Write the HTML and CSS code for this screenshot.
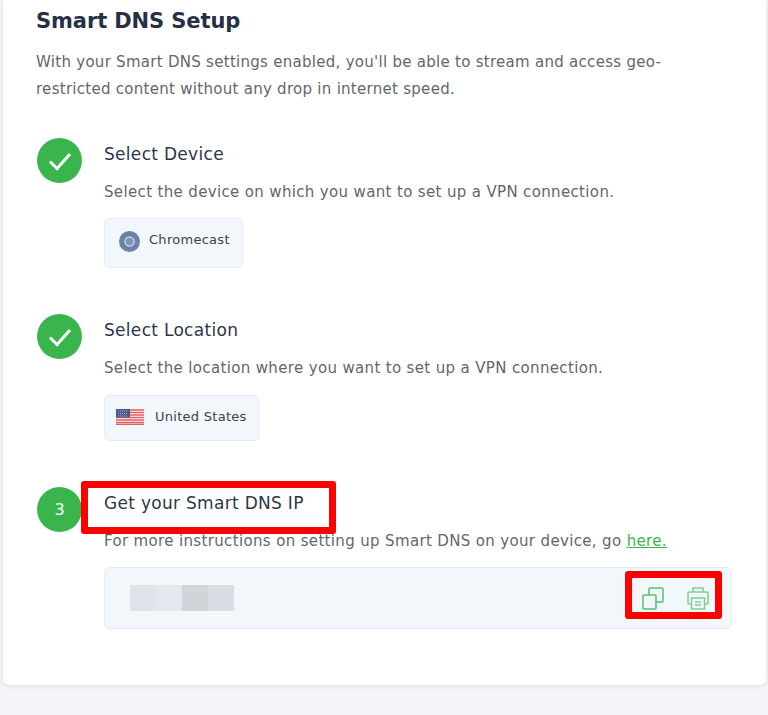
FILE: index.html
```html
<!DOCTYPE html>
<html lang="en">
<head>
<meta charset="utf-8">
<title>Smart DNS Setup</title>
<link rel="stylesheet" href="styles.css">
</head>
<body>
<main class="card">
  <h1 class="title">Smart DNS Setup</h1>
  <p class="intro">With your Smart DNS settings enabled, you'll be able to stream and access geo-restricted content without any drop in internet speed.</p>

  <section class="step">
    <div class="badge"><svg width="24" height="24" viewBox="0 0 24 24"><path d="M2 12.5l7 7L22 5" fill="none" stroke="#fff" stroke-width="3"/></svg></div>
    <div class="body">
      <h2 class="step-title">Select Device</h2>
      <p class="step-text">Select the device on which you want to set up a VPN connection.</p>
      <div class="chip chip-device">
        <svg class="chip-icon" width="21" height="21" viewBox="0 0 21 21"><circle cx="10.5" cy="10.5" r="10.5" fill="#6a83a8"/><circle cx="10.5" cy="10.5" r="4.5" fill="#7f94b4" stroke="#c4cedd" stroke-width="1.5"/></svg>
        <span class="chip-label">Chromecast</span>
      </div>
    </div>
  </section>

  <section class="step">
    <div class="badge"><svg width="24" height="24" viewBox="0 0 24 24"><path d="M2 12.5l7 7L22 5" fill="none" stroke="#fff" stroke-width="3"/></svg></div>
    <div class="body">
      <h2 class="step-title">Select Location</h2>
      <p class="step-text">Select the location where you want to set up a VPN connection.</p>
      <div class="chip chip-location">
        <svg class="chip-icon" width="28" height="16" viewBox="0 0 28 16"><rect width="28" height="16" fill="#fff"/><path d="M0 1h28M0 3.5h28M0 6h28M0 8.500h28M0 11h28M0 13.500h28M0 15.500h28" stroke="#e2595f" stroke-width="1.300"/><rect width="14" height="8.500" fill="#4a5a88"/><path d="M2 2h10M2 4.500h10M2 7h10" stroke="#a9b2cb" stroke-width="1" stroke-dasharray="1 1"/></svg>
        <span class="chip-label">United States</span>
      </div>
    </div>
  </section>

  <section class="step">
    <div class="badge">3</div>
    <div class="body">
      <h2 class="step-title">Get your Smart DNS IP</h2>
      <p class="step-text">For more instructions on setting up Smart DNS on your device, go <a class="link" href="#">here.</a></p>
      <div class="ip-box">
        <div class="ip-blur"><i class="b1"></i><i class="b2"></i><i class="b3"></i><i class="b4"></i></div>
        <div class="ip-actions">
          <svg class="ico" width="22" height="23" viewBox="0 0 22 23" fill="none" stroke="#55c16b" stroke-width="1.500"><rect x="1" y="8" width="13" height="14" rx="1"/><path d="M7 8V2a1 1 0 0 1 1-1h12a1 1 0 0 1 1 1v12a1 1 0 0 1-1 1h-6"/></svg>
          <svg class="ico" width="22" height="23" viewBox="0 0 22 23" fill="none" stroke="#7fd08e" stroke-width="1.500"><path d="M6 5V1h10v4"/><path d="M4.500 17H2a1 1 0 0 1-1-1V6a1 1 0 0 1 1-1h18a1 1 0 0 1 1 1v10a1 1 0 0 1-1 1h-2.500"/><rect x="4.500" y="11" width="13" height="11"/><path d="M8 15h6M8 18h6"/></svg>
        </div>
      </div>
    </div>
  </section>

  <div class="mark mark-title"></div>
  <div class="mark mark-actions"></div>
</main>
</body>
</html>
```

FILE: styles.css
```css
* { box-sizing: border-box; }
html, body { margin: 0; height: 715px; overflow: hidden; }
body {
  background: #f3f5fa;
  font-family: "DejaVu Sans", sans-serif;
  padding: 0 2px 0 3px;
}
.card {
  position: relative;
  height: 685px;
  background: #fff;
  border-radius: 0 0 6px 6px;
  box-shadow: 0 1px 5px rgba(40, 50, 80, 0.12);
  padding: 6px 34px 0;
}
.title {
  margin: 0 0 0 -1px;
  font-size: 21px;
  line-height: 30px;
  font-weight: 600;
  letter-spacing: -0.1px;
  color: #253044;
}
.intro {
  margin: 13px 0 0 -1px;
  font-size: 15px;
  line-height: 27px;
  letter-spacing: 0.28px;
  color: #63666e;
}
.step { display: flex; gap: 22px; margin-top: 46px; }
.step:first-of-type { margin-top: 35px; }
.badge {
  flex: none;
  width: 45px;
  height: 45px;
  border-radius: 50%;
  background: #3ab54e;
  display: flex;
  align-items: center;
  justify-content: center;
  color: #fff;
  font-size: 16px;
}
.body { flex: 1; min-width: 0; }
.step-title {
  margin: 0;
  font-size: 17px;
  line-height: 32px;
  font-weight: 400;
  letter-spacing: 0.3px;
  color: #2d3648;
}
.step-text {
  margin: 12px 0 0;
  font-size: 15px;
  line-height: 20px;
  letter-spacing: 0.35px;
  color: #63666e;
}
.link { color: #3ab54e; }
.chip {
  display: flex;
  align-items: center;
  background: #f2f7fb;
  border: 1px solid #e6eef5;
  border-radius: 5px;
  font-size: 13px;
  letter-spacing: 0.28px;
  color: #3b4150;
}
.chip-icon { flex: none; }
.chip-device { gap: 9px; width: 139px; height: 50px; margin-top: 16px; padding: 0 8px 4px 14px; }
.chip-device .chip-label { padding-bottom: 4px; }
.chip-location { gap: 11px; width: 155px; height: 46px; margin-top: 17px; padding: 0 8px 2px 11px; }
.chip-location .chip-label { padding-bottom: 2px; }
.ip-box {
  display: flex;
  align-items: center;
  justify-content: space-between;
  height: 62px;
  margin-top: 16px;
  background: #f2f7fb;
  border: 1px solid #e6eef5;
  border-radius: 5px;
  padding: 0 22px 0 25px;
}
.ip-blur { display: flex; height: 26px; }
.ip-blur i { display: block; width: 26px; }
.b1 { background: #dfe4ea; }
.b2 { background: #e2e8ed; }
.b3 { background: #d0d5da; }
.b4 { background: #d9dee5; }
.ip-actions { display: flex; gap: 23px; }
.ico { display: block; }
.mark { position: absolute; border: 7px solid #ff0000; border-radius: 3px; }
.mark-title { left: 78px; top: 481px; width: 255px; height: 53px; }
.mark-actions { left: 622px; top: 571px; width: 97px; height: 48px; }
```
